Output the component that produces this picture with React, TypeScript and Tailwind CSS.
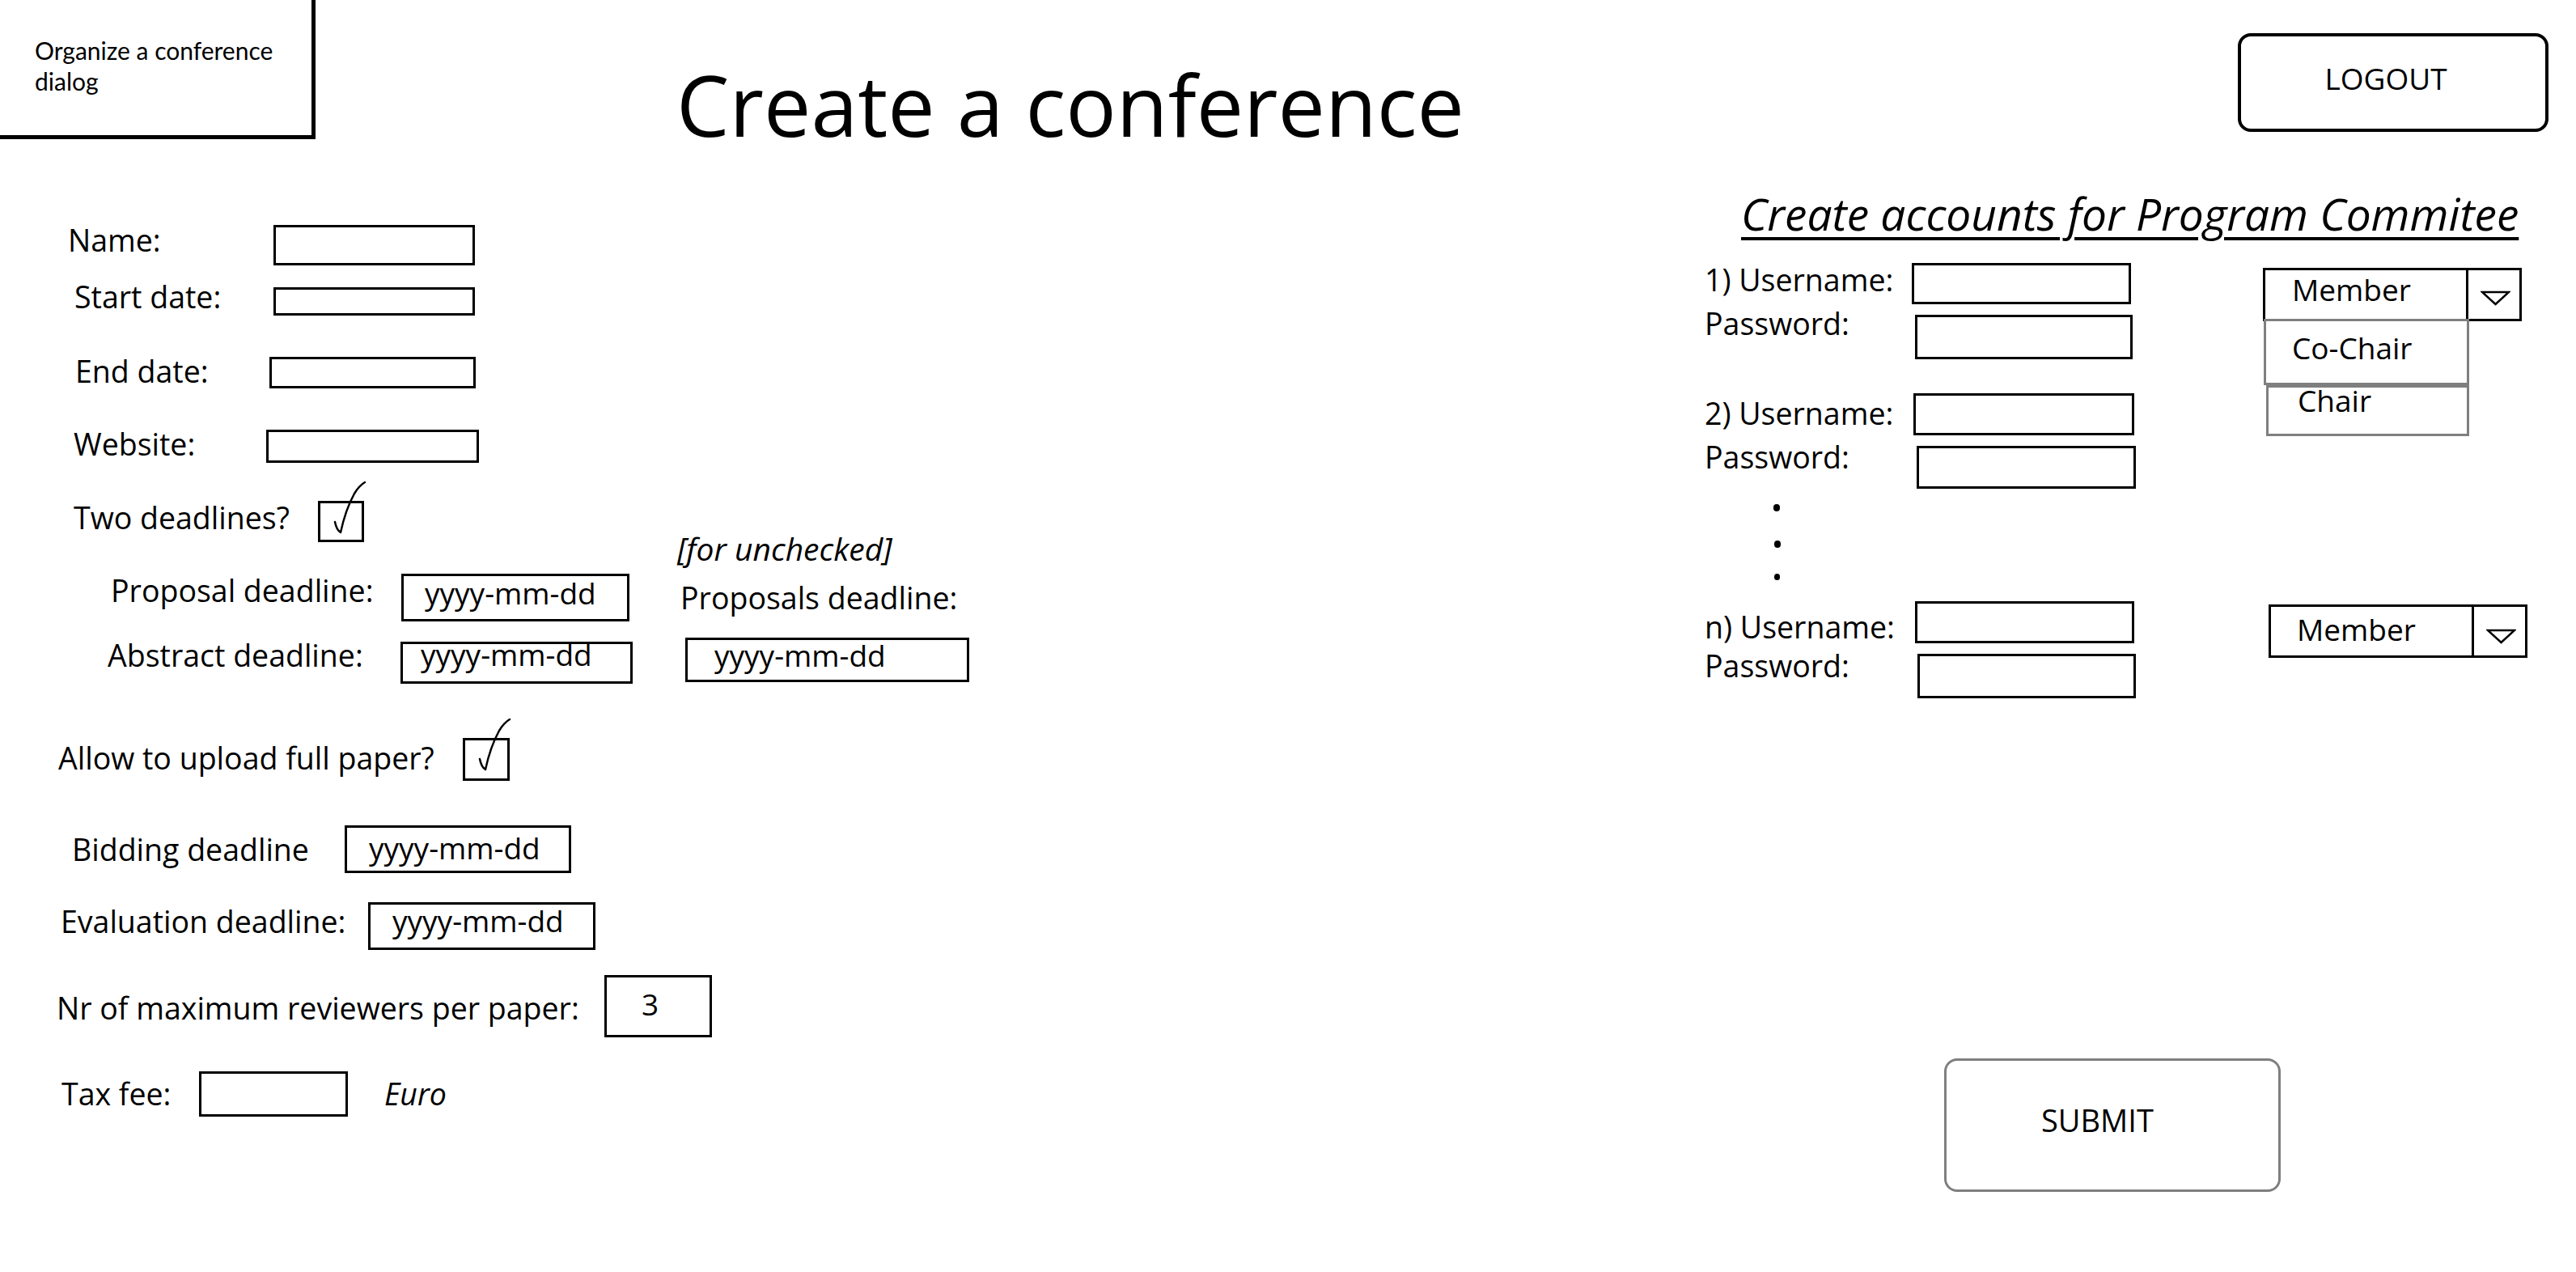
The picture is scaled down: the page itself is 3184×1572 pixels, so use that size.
import React from "react";

function Check() {
  return (
    <svg
      className="absolute left-0 top-[-32px] overflow-visible"
      width="60"
      height="84"
      viewBox="0 0 60 84"
      fill="none"
    >
      <path
        d="M18 55 Q20 65 25 68 Q31 40 42 20 Q48 10 55 6"
        stroke="black"
        strokeWidth="2.5"
        strokeLinecap="round"
        strokeLinejoin="round"
      />
    </svg>
  );
}

function Tri() {
  return (
    <svg width="37" height="19" viewBox="0 0 37 19" fill="none">
      <path d="M2 2 H35 L18.5 17 Z" stroke="black" strokeWidth="2.5" />
    </svg>
  );
}

export default function App() {
  return (
    <div className="flex h-[1572px] w-[3184px] overflow-hidden bg-white text-black font-['Open_Sans',sans-serif]">
      {/* LEFT COLUMN */}
      <div className="flex w-[2100px] shrink-0 flex-col">
        {/* header */}
        <div className="flex h-[278px] items-start">
          <div className="h-[172px] w-[390px] shrink-0 border-b-[5px] border-r-[5px] border-black pl-[43px] pt-[43px]">
            <div className="w-[330px] font-['Lato',sans-serif] text-[30px] leading-[38px]">
              Organize a conference dialog
            </div>
          </div>
          <div className="ml-[446px] mt-[77px] whitespace-nowrap text-[104px] leading-none">Create a conference</div>
        </div>

        {/* Name */}
        <div className="flex h-[70px] items-start">
          <div className="ml-[84px] w-[254px] shrink-0 whitespace-nowrap text-[37.5px] leading-none">Name:</div>
          <div className="h-[50px] w-[249px] shrink-0 border-[3px] border-black" />
        </div>
        {/* Start date */}
        <div className="flex h-[92px] items-start">
          <div className="ml-[92px] w-[246px] shrink-0 whitespace-nowrap text-[37.5px] leading-none">Start date:</div>
          <div className="mt-[7px] h-[35px] w-[249px] shrink-0 border-[3px] border-black" />
        </div>
        {/* End date */}
        <div className="flex h-[90px] items-start">
          <div className="ml-[93px] w-[240px] shrink-0 whitespace-nowrap text-[37.5px] leading-none">End date:</div>
          <div className="mt-[1px] h-[39px] w-[255px] shrink-0 border-[3px] border-black" />
        </div>
        {/* Website */}
        <div className="flex h-[89px] items-start">
          <div className="ml-[91px] w-[238px] shrink-0 whitespace-nowrap text-[37.5px] leading-none">Website:</div>
          <div className="mt-[1px] h-[41px] w-[263px] shrink-0 border-[3px] border-black" />
        </div>
        {/* Two deadlines */}
        <div className="flex h-[39px] items-start">
          <div className="ml-[91px] mt-[1.5px] w-[302px] shrink-0 whitespace-nowrap text-[37.5px] leading-none">
            Two deadlines?
          </div>
          <div className="relative h-[51px] w-[57px] shrink-0 border-[3px] border-black">
            <Check />
          </div>
        </div>

        {/* deadlines block */}
        <div className="flex h-[254px] items-start">
          <div className="flex w-[837px] shrink-0 flex-col">
            <div className="mt-[51px] flex h-[81.5px] items-start">
              <div className="ml-[137px] mt-[1.5px] w-[359px] shrink-0 whitespace-nowrap text-[37.5px] leading-none">
                Proposal deadline:
              </div>
              <div className="h-[59px] w-[282px] shrink-0 border-[3px] border-black pl-[26px] pt-[2px]">
                <div className="whitespace-nowrap text-[37px] leading-none">yyyy-mm-dd</div>
              </div>
            </div>
            <div className="flex items-start">
              <div className="ml-[133px] w-[362px] shrink-0 whitespace-nowrap text-[37.5px] leading-none">
                Abstract deadline:
              </div>
              <div className="mt-[2.5px] h-[52px] w-[287px] shrink-0 border-[3px] border-black pl-[22px]">
                <div className="mt-[-6px] whitespace-nowrap text-[37px] leading-none">yyyy-mm-dd</div>
              </div>
            </div>
          </div>
          <div className="flex flex-col">
            <div className="whitespace-nowrap text-[39px] italic leading-none">[for unchecked]</div>
            <div className="ml-[4px] mt-[23px] whitespace-nowrap text-[37.5px] leading-none">Proposals deadline:</div>
            <div className="ml-[10px] mt-[30px] h-[55px] w-[351px] border-[3px] border-black pl-[33px]">
              <div className="whitespace-nowrap text-[37px] leading-none">yyyy-mm-dd</div>
            </div>
          </div>
        </div>

        {/* Allow upload */}
        <div className="flex h-[108px] items-start">
          <div className="ml-[72px] mt-[5.5px] w-[500px] shrink-0 whitespace-nowrap text-[37.5px] leading-none">
            Allow to upload full paper?
          </div>
          <div className="relative h-[53px] w-[58px] shrink-0 border-[3px] border-black">
            <Check />
          </div>
        </div>
        {/* Bidding */}
        <div className="flex h-[95px] items-start">
          <div className="ml-[89px] mt-[10.5px] w-[337px] shrink-0 whitespace-nowrap text-[37.5px] leading-none">
            Bidding deadline
          </div>
          <div className="h-[59px] w-[280px] shrink-0 border-[3px] border-black pl-[27px] pt-[6px]">
            <div className="whitespace-nowrap text-[37px] leading-none">yyyy-mm-dd</div>
          </div>
        </div>
        {/* Evaluation */}
        <div className="flex h-[90px] items-start">
          <div className="ml-[75px] mt-[4.5px] w-[380px] shrink-0 whitespace-nowrap text-[37.5px] leading-none">
            Evaluation deadline:
          </div>
          <div className="h-[59px] w-[281px] shrink-0 border-[3px] border-black pl-[27px] pt-[1px]">
            <div className="whitespace-nowrap text-[37px] leading-none">yyyy-mm-dd</div>
          </div>
        </div>
        {/* Nr reviewers */}
        <div className="flex h-[119px] items-start">
          <div className="ml-[70px] mt-[21.5px] w-[677px] shrink-0 whitespace-nowrap text-[37.5px] leading-none">
            Nr of maximum reviewers per paper:
          </div>
          <div className="h-[77px] w-[133px] shrink-0 border-[3px] border-black pl-[43px] pt-[14px]">
            <div className="text-[37px] leading-none">3</div>
          </div>
        </div>
        {/* Tax fee */}
        <div className="flex h-[56px] items-start">
          <div className="ml-[76px] mt-[8.5px] w-[170px] shrink-0 whitespace-nowrap text-[37.5px] leading-none">Tax fee:</div>
          <div className="h-[56px] w-[184px] shrink-0 border-[3px] border-black" />
          <div className="ml-[45px] mt-[8.5px] text-[37.5px] italic leading-none">Euro</div>
        </div>
      </div>

      {/* RIGHT COLUMN */}
      <div className="flex flex-1 flex-col">
        <div className="ml-[666px] mt-[41px] flex h-[122px] w-[384px] items-center justify-center rounded-[16px] border-4 border-black pb-[12px] pr-[18px]">
          <span className="text-[37px] leading-none">LOGOUT</span>
        </div>

        <div className="ml-[52px] mt-[73px] whitespace-nowrap text-[55px] italic leading-none underline decoration-[4px] underline-offset-[8px]">
          Create accounts for Program Commitee
        </div>

        {/* Block 1 */}
        <div className="mt-[34px] flex items-start">
          <div className="flex w-[536px] shrink-0 flex-col">
            <div className="flex items-start">
              <div className="ml-[7px] mt-[1.5px] w-[256px] shrink-0 whitespace-nowrap text-[37.5px] leading-none">
                1) Username:
              </div>
              <div className="h-[51px] w-[271px] shrink-0 border-[3px] border-black" />
            </div>
            <div className="mt-[4.5px] flex items-start">
              <div className="ml-[7px] w-[260px] shrink-0 whitespace-nowrap text-[37.5px] leading-none">Password:</div>
              <div className="mt-[8.5px] h-[55px] w-[269px] shrink-0 border-[3px] border-black" />
            </div>
          </div>
          <div className="relative ml-[161px] mt-[6px] flex h-[66px] w-[320px] shrink-0 border-[3px] border-black">
            <div className="w-[248px] shrink-0 pl-[33px] pt-[4.5px]">
              <div className="text-[37px] leading-none">Member</div>
            </div>
            <div className="flex-1 border-l-[3px] border-black pl-[15px] pt-[25px]">
              <Tri />
            </div>
            <div className="absolute left-[-2px] top-full flex flex-col">
              <div className="h-[82px] w-[254px] border-[3px] border-[#7f7f7f] pl-[32px] pt-[13.5px]">
                <div className="text-[37px] leading-none">Co-Chair</div>
              </div>
              <div className="ml-[3px] h-[63px] w-[251px] border-[3px] border-[#7f7f7f] pl-[36px]">
                <div className="mt-[-3px] text-[37px] leading-none">Chair</div>
              </div>
            </div>
          </div>
        </div>

        {/* Block 2 */}
        <div className="mt-[42px] flex w-[540px] flex-col">
          <div className="flex items-start">
            <div className="ml-[7px] mt-[5.5px] w-[258px] shrink-0 whitespace-nowrap text-[37.5px] leading-none">
              2) Username:
            </div>
            <div className="h-[52px] w-[273px] shrink-0 border-[3px] border-black" />
          </div>
          <div className="mt-[7.5px] flex items-start">
            <div className="ml-[7px] w-[262px] shrink-0 whitespace-nowrap text-[37.5px] leading-none">Password:</div>
            <div className="mt-[5.5px] h-[53px] w-[271px] shrink-0 border-[3px] border-black" />
          </div>
        </div>

        {/* Dots */}
        <div className="ml-[92px] flex flex-col">
          <div className="mt-[19px] h-[9px] w-[8px] rounded-full bg-black" />
          <div className="ml-[1px] mt-[36px] h-[9px] w-[8px] rounded-full bg-black" />
          <div className="ml-[1px] mt-[32px] h-[8px] w-[7px] rounded-full bg-black" />
        </div>

        {/* Block n */}
        <div className="mt-[26px] flex items-start">
          <div className="flex w-[540px] shrink-0 flex-col">
            <div className="flex items-start">
              <div className="ml-[7px] mt-[12.5px] w-[260px] shrink-0 whitespace-nowrap text-[37.5px] leading-none">
                n) Username:
              </div>
              <div className="h-[52px] w-[271px] shrink-0 border-[3px] border-black" />
            </div>
            <div className="mt-[8.5px] flex items-start">
              <div className="ml-[7px] w-[263px] shrink-0 whitespace-nowrap text-[37.5px] leading-none">Password:</div>
              <div className="mt-[4.5px] h-[55px] w-[270px] shrink-0 border-[3px] border-black" />
            </div>
          </div>
          <div className="ml-[164px] mt-[4px] flex h-[66px] w-[320px] shrink-0 border-[3px] border-black">
            <div className="w-[248px] shrink-0 pl-[32px] pt-[8.5px]">
              <div className="text-[37px] leading-none">Member</div>
            </div>
            <div className="flex-1 border-l-[3px] border-black pl-[15px] pt-[27px]">
              <Tri />
            </div>
          </div>
        </div>

        {/* Submit */}
        <div className="ml-[303px] mt-[445px] h-[165px] w-[416px] rounded-[16px] border-[3px] border-[#7f7f7f] pl-[117px] pt-[54px]">
          <div className="whitespace-nowrap text-[38px] leading-none">SUBMIT</div>
        </div>
      </div>
    </div>
  );
}
